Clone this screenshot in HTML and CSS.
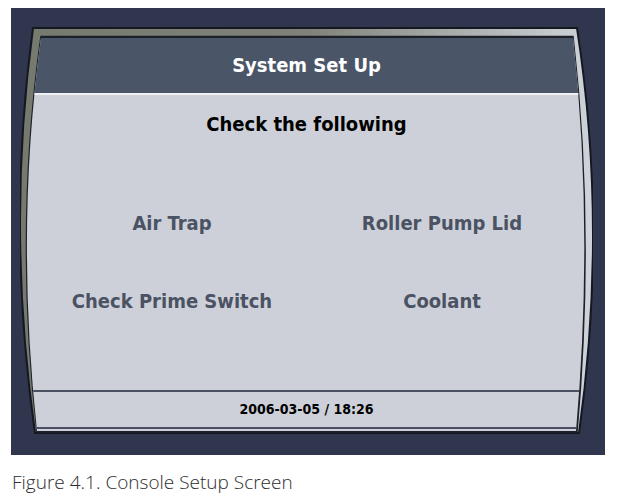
FILE: index.html
```html
<!DOCTYPE html>
<html>
<head>
<meta charset="utf-8">
<link rel="stylesheet" href="styles.css">
</head>
<body>
<div class="frame">
  <div class="bezel">
    <div class="screen">
      <div class="title">System Set Up</div>
      <div class="body">
        <div class="heading">Check the following</div>
        <div class="items">
          <div class="item">Air Trap</div>
          <div class="item">Roller Pump Lid</div>
          <div class="item">Check Prime Switch</div>
          <div class="item">Coolant</div>
        </div>
      </div>
      <div class="footer">2006-03-05 / 18:26</div>
    </div>
  </div>
</div>
<div class="caption">Figure 4.1. Console Setup Screen</div>
</body>
</html>
```
FILE: styles.css
```css
html, body {
  margin: 0;
  padding: 0;
  background: #ffffff;
}
body {
  width: 631px;
  height: 496px;
  overflow: hidden;
}
.frame {
  margin: 8px 0 0 11px;
  width: 594px;
  height: 447px;
  box-sizing: border-box;
  padding: 19px 12px 21px 9px;
  background: #2f364e;
}
.bezel {
  width: 573px;
  height: 407px;
  box-sizing: border-box;
  padding-top: 11px;
  background-image: url("data:image/svg+xml;utf8,<svg xmlns='http://www.w3.org/2000/svg' width='573' height='407' viewBox='0 0 573 407'><defs><linearGradient id='g' x1='0' y1='0' x2='1' y2='0'><stop offset='0' stop-color='%23767a6e'/><stop offset='0.5' stop-color='%23808279'/><stop offset='1' stop-color='%23cfd4da'/></linearGradient></defs><path d='M13 1 L557 1 Q588 200 559 406 L15 406 Q-14 200 13 1 Z' fill='url(%23g)' stroke='%23151821' stroke-width='2'/><path d='M21 9.5 L553 9.5 Q575 201 557 405 L17 405 Q-6 201 21 9.5 Z' fill='%231c2029' stroke='%231c2029' stroke-width='1.5'/></svg>");
  background-repeat: no-repeat;
}
.screen {
  height: 393px;
  display: flex;
  flex-direction: column;
  clip-path: path('M21 0 L553 0 Q574 190 556 393 L17 393 Q-5 190 21 0 Z');
  background: #cdd0d8;
  font-family: "DejaVu Sans Condensed", "DejaVu Sans", sans-serif;
  font-weight: bold;
}
.title {
  height: 55px;
  line-height: 54px;
  background: #4a5567;
  color: #ffffff;
  text-align: center;
  font-size: 20px;
  border-bottom: 2px solid #eef0f2;
}
.body {
  height: 295px;
  box-sizing: border-box;
  padding-top: 14px;
}
.heading {
  height: 30px;
  line-height: 30px;
  text-align: center;
  font-size: 20px;
  color: #000000;
}
.items {
  margin-top: 69px;
  padding-left: 17px;
  display: grid;
  grid-template-columns: 270px 270px;
  row-gap: 48px;
}
.item {
  height: 30px;
  line-height: 30px;
  text-align: center;
  font-size: 20px;
  color: #4a5263;
}
.footer {
  height: 35px;
  line-height: 35px;
  border-top: 2px solid #4b5162;
  border-bottom: 2px solid #4b5162;
  text-align: center;
  font-size: 14px;
  color: #000000;
}
.caption {
  margin: 15px 0 0 12px;
  font-family: "Open Sans", sans-serif;
  font-weight: 300;
  font-size: 19px;
  line-height: 24px;
  color: #2e2e2e;
}
```
